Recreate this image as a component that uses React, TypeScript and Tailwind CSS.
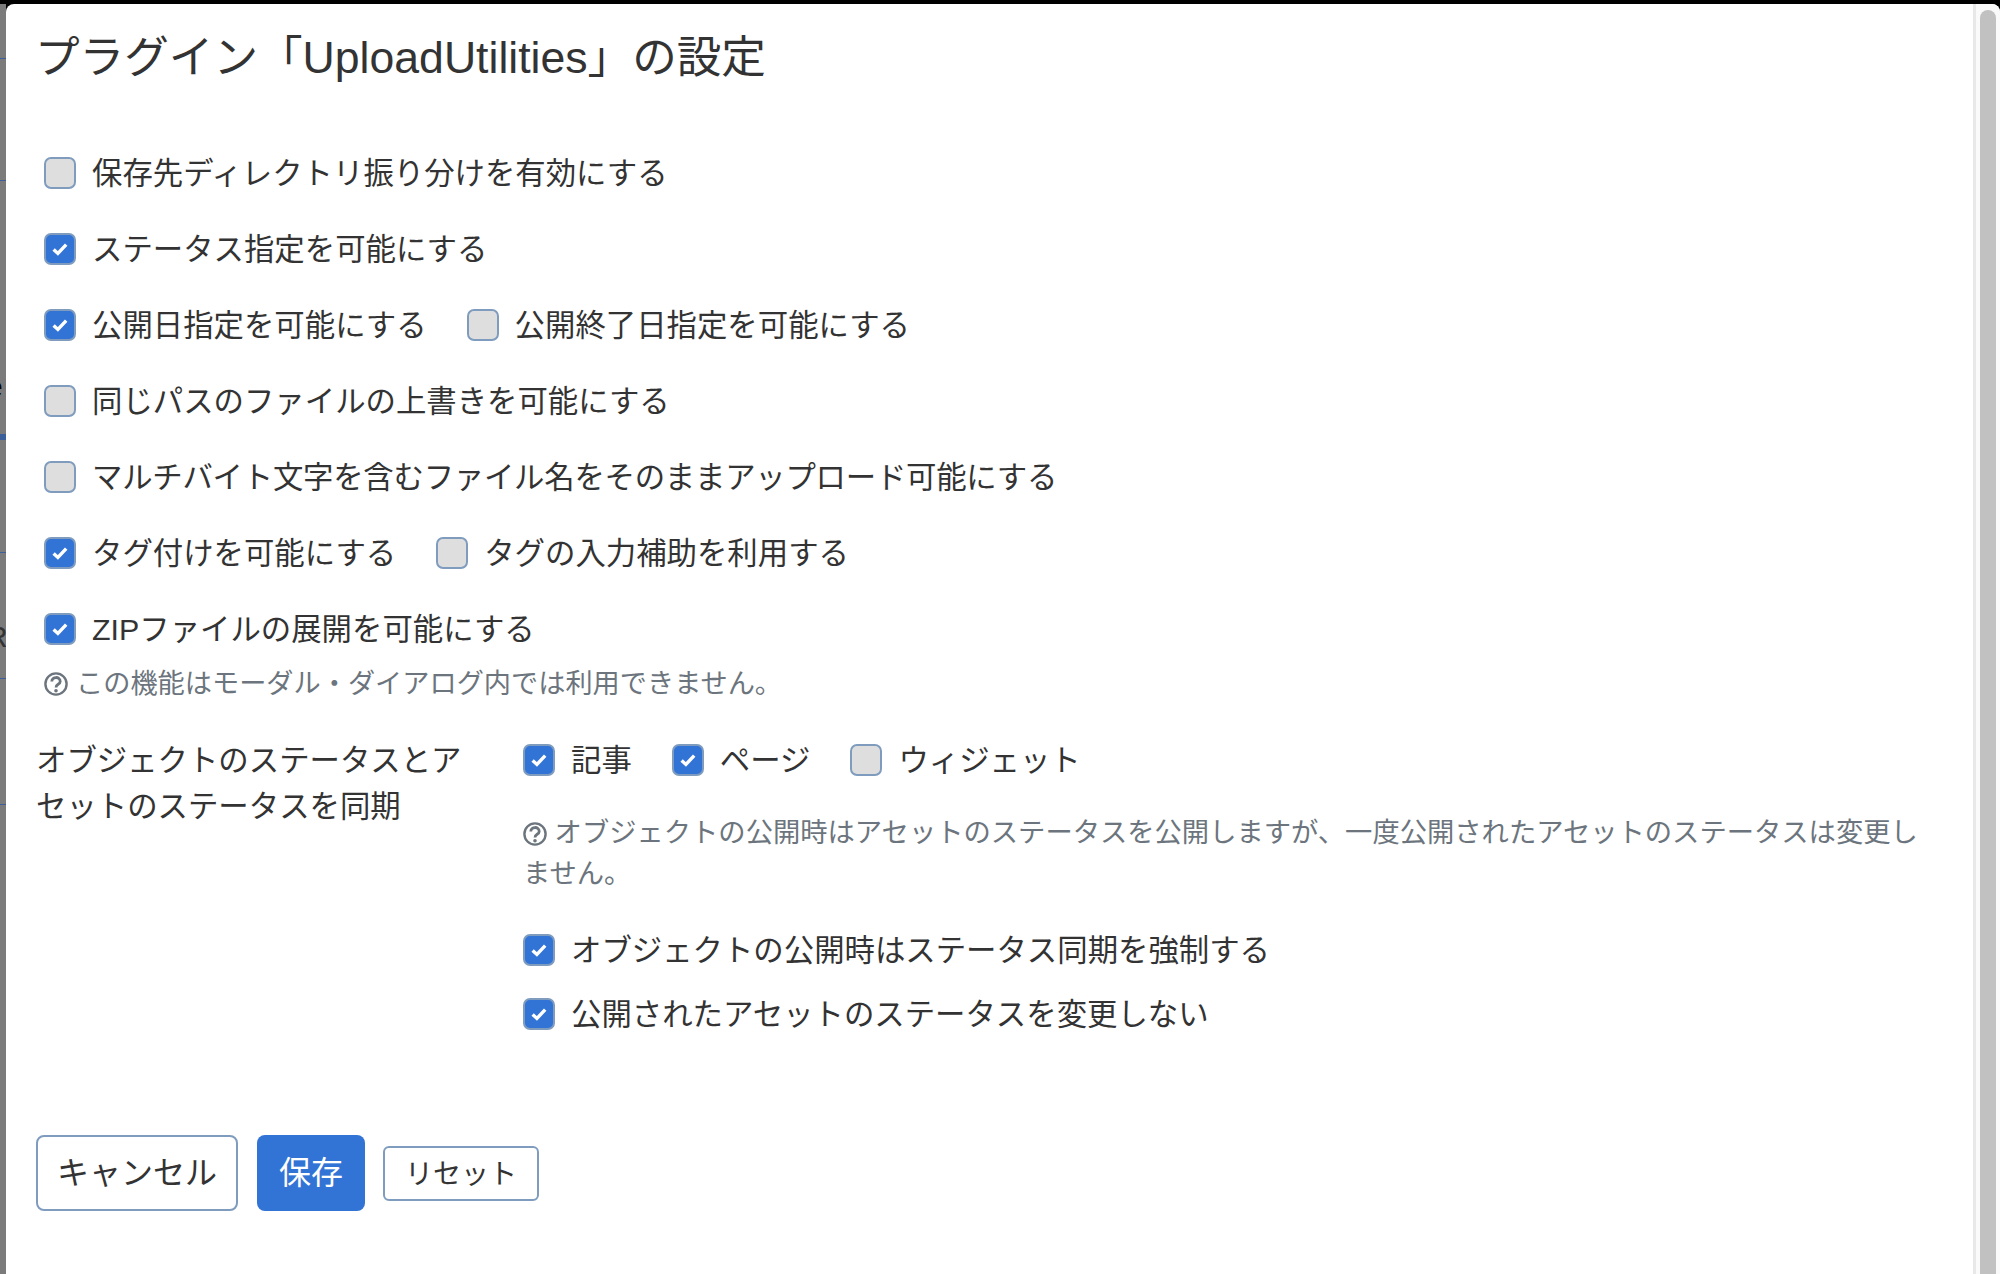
import React from "react";

const FONT = "font-['Liberation_Sans','Noto_Sans_CJK_JP',sans-serif]";

function Check({ on }: { on?: boolean }) {
  return (
    <span
      className={
        "flex h-[32px] w-[32px] shrink-0 items-center justify-center rounded-[7px] border-2 border-[#7f9cbf] " +
        (on ? "bg-[#3273d6]" : "bg-[#dedede]")
      }
    >
      {on && (
        <svg width="18" height="16" viewBox="0 0 18 16">
          <path d="M2.6 8.4 L6.9 12.4 L15.2 3.6" fill="none" stroke="#fff" strokeWidth="3.4" />
        </svg>
      )}
    </span>
  );
}

function Opt({ on, label, className = "" }: { on?: boolean; label: string; className?: string }) {
  return (
    <label className={"flex items-center gap-[16px] whitespace-nowrap " + className}>
      <Check on={on} />
      <span>{label}</span>
    </label>
  );
}

function HelpIcon() {
  return (
    <svg width="24" height="24" viewBox="0 0 24 24" className="inline-block shrink-0 align-[-4px]">
      <circle cx="12" cy="12" r="10.6" fill="none" stroke="#6c757d" strokeWidth="2.4" />
      <path d="M7.8 9.6 C7.8 4.2 16.2 4.2 16.2 9.4 C16.2 12.6 12 12 12 15.4" fill="none" stroke="#6c757d" strokeWidth="2.8" />
      <circle cx="12" cy="18.8" r="1.8" fill="#6c757d" />
    </svg>
  );
}

export default function App() {
  return (
    <div className={"relative flex h-[1274px] w-[2000px] flex-col overflow-hidden bg-black text-[30.4px] leading-[46px] text-[#333] " + FONT}>
      <div className="h-[4px] shrink-0" />
      <div className="flex min-h-0 flex-1">
        <div className="relative w-[6px] shrink-0 overflow-hidden bg-[#7b7b7b]">
          <span className="absolute left-[-14px] top-[360px] text-[30px] text-black">e</span>
          <span className="absolute left-[-14px] top-[610px] text-[30px] text-[#333]">R</span>
          <span className="absolute left-0 top-[54px] h-[1px] w-[6px] bg-[#3d5f99]" />
          <span className="absolute left-0 top-[176px] h-[1px] w-[6px] bg-[#3d5f99]" />
          <span className="absolute left-0 top-[430px] h-[6px] w-[6px] bg-[#3d5f99]" />
          <span className="absolute left-0 top-[548px] h-[1px] w-[6px] bg-[#3d5f99]" />
          <span className="absolute left-0 top-[674px] h-[1px] w-[6px] bg-[#3d5f99]" />
          <span className="absolute left-0 top-[800px] h-[1px] w-[6px] bg-[#3d5f99]" />
        </div>
        <div className="flex min-w-0 flex-1 overflow-hidden rounded-t-[8px] bg-white">
          <div className="flex min-w-0 flex-1 flex-col pl-[30px]">
            <h1 className="ml-[-1px] mt-[25px] whitespace-nowrap text-[44.6px] font-normal leading-[58px] text-[#333]">
              プラグイン「UploadUtilities」の設定
            </h1>

            <div className="mt-[63px] flex flex-col gap-[30px] pl-[8px]">
              <Opt label="保存先ディレクトリ振り分けを有効にする" />
              <Opt on label="ステータス指定を可能にする" />
              <div className="flex gap-[40px]">
                <Opt on label="公開日指定を可能にする" />
                <Opt label="公開終了日指定を可能にする" />
              </div>
              <Opt label="同じパスのファイルの上書きを可能にする" />
              <Opt className="tracking-[-0.24px]" label="マルチバイト文字を含むファイル名をそのままアップロード可能にする" />
              <div className="flex gap-[40px]">
                <Opt on label="タグ付けを可能にする" />
                <Opt label="タグの入力補助を利用する" />
              </div>
              <Opt on label="ZIPファイルの展開を可能にする" />
            </div>

            <p className="mt-[11px] flex items-center gap-[8px] pl-[8px] text-[27.2px] leading-[42px] text-[#6c757d]">
              <HelpIcon />
              この機能はモーダル・ダイアログ内では利用できません。
            </p>

            <div className="mt-[32px] flex">
              <div className="w-[487px] shrink-0">
                <div className="w-[430px]">オブジェクトのステータスとアセットのステータスを同期</div>
              </div>
              <div className="min-w-0 flex-1">
                <div className="flex gap-[40px]">
                  <Opt on label="記事" />
                  <Opt on label="ページ" />
                  <Opt label="ウィジェット" />
                </div>
                <p className="mt-[29px] w-[1405px] text-[27.3px] leading-[41px] text-[#6c757d]">
                  <HelpIcon /> オブジェクトの公開時はアセットのステータスを公開しますが、一度公開されたアセットのステータスは変更しません。
                </p>
                <div className="mt-[33px] flex flex-col gap-[18px]">
                  <Opt on label="オブジェクトの公開時はステータス同期を強制する" />
                  <Opt on label="公開されたアセットのステータスを変更しない" />
                </div>
              </div>
            </div>

            <div className="mt-[98px] flex items-center gap-[19px]">
              <button className="flex h-[76px] w-[202px] items-center justify-center rounded-[8px] border-2 border-[#7f9cbf] bg-white text-[32px] text-[#333]">
                キャンセル
              </button>
              <button className="flex h-[76px] w-[108px] items-center justify-center rounded-[8px] bg-[#3273d6] text-[32px] text-white">
                保存
              </button>
              <button className="ml-[-1px] flex h-[55px] w-[156px] items-center justify-center rounded-[6px] border-2 border-[#7f9cbf] bg-white pt-[3px] text-[28px] text-[#333]">
                リセット
              </button>
            </div>
          </div>

          <div className="w-[27px] shrink-0 border-l-[3px] border-[#e8e8e8] bg-[#fafafa] pl-[4px] pt-[6px]">
            <div className="h-[1400px] w-[16px] rounded-full bg-[#c1c1c1]" />
          </div>
        </div>
      </div>
    </div>
  );
}
